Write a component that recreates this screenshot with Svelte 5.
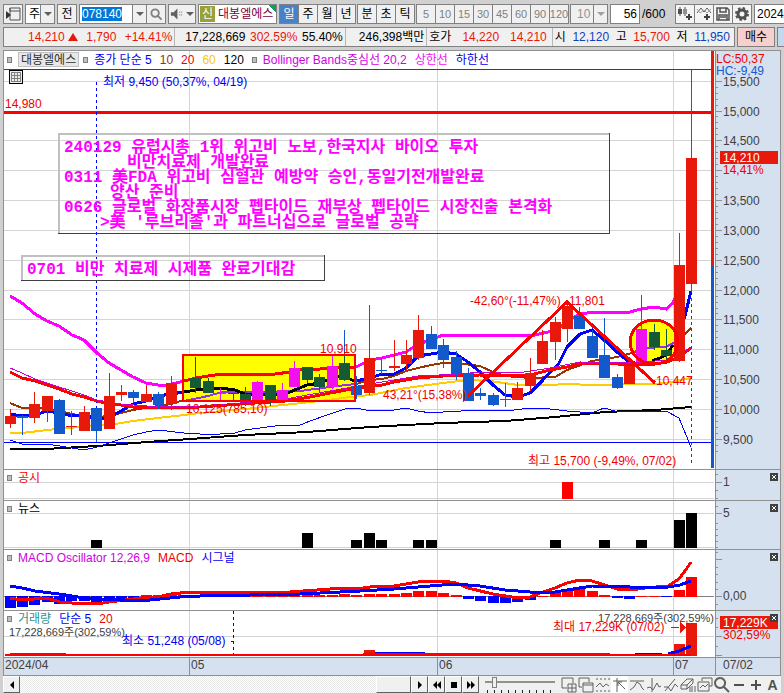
<script>
  import { onMount } from 'svelte';

  let codeInput;
  let code = '078140';
  let period = '일';
  let count = '56';
  let date = '2024/07/02';
  let tool = 3;

  const months = [189.5, 437.5, 673.5];
  const periods = [['일', '주', '월', '년'], ['분', '초', '틱']];
  const minutes = ['5', '10', '15', '30', '45', '60', '90', '120'];

  onMount(() => {
    codeInput.focus();
    codeInput.select();
  });

  const xAt = (i) => Math.floor(10 + i * 12.39);
  const yAt = (price) => Math.floor(409.5 - ((price - 10000) / 500) * 29.85) + 0.5;

  // kind, body top, body bottom, wick top, wick bottom
  const candles = [
    ['up', 416, 424, 409, 428], ['down', 416, 418, 415, 435], ['up', 404, 418, 392, 423],
    ['up', 396, 411, 396, 422], ['down', 400, 434, 399, 434], ['up', 426, 427, 411, 435],
    ['up', 412, 431, 406, 431], ['down', 408, 431, 408, 442], ['up', 396, 429, 373, 429],
    ['up', 392, 395, 385, 401], ['down', 392, 398, 390, 403], ['up', 394, 402, 385, 402],
    ['down', 394, 405, 392, 409], ['up', 383, 404, 376, 410], null,
    ['green', 378, 388, 357, 393], ['green', 381, 393, 378, 393], ['pink', 393, 394, 388, 401],
    ['green', 393, 394, 393, 401], ['green', 394, 402, 387, 406], ['pink', 382, 400, 381, 400],
    ['green', 385, 401, 385, 406], ['pink', 390, 401, 383, 401], ['pink', 368, 387, 361, 387],
    ['green', 367, 380, 367, 383], ['green', 377, 387, 374, 392], ['pink', 366, 387, 355, 389],
    ['green', 363, 380, 355, 381], ['down', 386, 395, 376, 399], ['up', 358, 393, 305, 395],
    ['down', 370, 371, 358, 374], ['up', 366, 368, 340, 371], ['up', 355, 364, 340, 372],
    ['up', 330, 358, 315, 360], ['down', 334, 349, 326, 349], ['down', 345, 360, 339, 368],
    ['down', 357, 374, 351, 380], ['down', 373, 401, 368, 401], ['down', 393, 396, 388, 400],
    ['down', 395, 405, 393, 406], ['up', 399, 400, 383, 407], ['up', 388, 400, 382, 400],
    ['up', 373, 386, 358, 391], ['up', 341, 364, 330, 364], ['up', 322, 342, 317, 360],
    ['up', 306, 329, 302, 342], ['down', 316, 329, 307, 329], ['down', 336, 358, 330, 358],
    ['down', 355, 378, 318, 378], ['down', 377, 388, 374, 389], ['up', 366, 384, 366, 384],
    ['pink', 329, 362, 320, 362], ['green', 332, 347, 324, 350], ['green', 350, 356, 329, 359],
    ['up', 265, 361, 233, 362], ['up', 158, 284, 70, 292]
  ];

  const lines = [
    { c: '#ffcc00', w: 2, p: '10,433 22,433 47,430 80,427 109,425 133,421 158,418 184,415 200,413 245,409 283,405 320,401 350,397 370,395 406,388 443,383 468,380 490,381 518,385 550,385 567,384 592,385 655,384 672,382 691,378' },
    { c: '#000000', w: 2, p: '10,449 45,449 97,446 147,442 190,439 245,435 307,432 370,427 443,423 505,421 555,417 605,412 655,410 691,407' },
    { c: '#0000ff', w: 1, p: '10,440 22,444 47,444 72,448 84,450 97,447 109,443 121,439 133,435 146,432 158,430 184,433 200,434 220,434 235,433 245,430 260,428 282,425 298,426 310,421 330,414 345,409 357,408 370,411 394,410 406,408 418,411 431,413 443,412 480,410 506,411 530,408 550,409 567,411 592,413 604,408 615,411 640,411 666,411 679,418 691,447' },
    { c: '#ff00ff', w: 3, p: '10,296 22,303 35,314 47,321 59,326 72,335 84,340 97,353 109,363 121,370 133,377 146,383 158,385 166,385 172,384 184,381' },
    { c: '#ff0000', w: 3, p: '184,381 196,378 208,376 222,374 275,374 290,372 300,369 320,369 345,367 356,367' },
    { c: '#ff00ff', w: 3, p: '356,367 370,360 382,358 394,355 406,352 418,344 431,340 443,335 535,335 548,332 560,327 568,320 580,314 587,313 630,312 641,309 654,307 666,309 673,303 679,290' },
    { c: '#993300', w: 2, p: '10,403 22,408 47,408 59,411 72,414 84,416 97,417 109,416 121,413 133,410 158,406 171,404 184,400' },
    { c: '#9030f0', w: 2, p: '184,401 208,396 222,392 260,392 300,391 330,387 355,384' },
    { c: '#993300', w: 2, p: '356,384 370,380 382,379 394,376 406,371 418,368 431,365 443,363 456,363 480,366 493,372 505,376 530,378 555,377 567,370 592,361 605,359 617,357 632,353' },
    { c: '#9030f0', w: 2, p: '632,353 644,348 666,347 677,341' },
    { c: '#993300', w: 2, p: '677,341 685,334 691,328' },
    { c: '#0000ff', w: 3, p: '10,414 22,416 35,415 47,411 59,413 72,416 84,415 97,419 109,418 121,411 133,404 146,401 158,396 171,394 184,392' },
    { c: '#000000', w: 3, p: '184,392 196,390 220,388 235,390 245,394 260,395 285,394 307,385 320,383 332,378 344,376 354,381' },
    { c: '#0000ff', w: 3, p: '356,381 370,378 382,374 394,374 406,368 418,356 431,354 443,352 456,354 468,362 480,372 493,385 505,395 518,397 530,393 542,381 550,372 558,365 567,347 580,334 592,330 604,340 617,352 629,362 640,364' },
    { c: '#000000', w: 3, p: '652,361 660,358 667,354 673,345' },
    { c: '#0000ff', w: 3, p: '678,337 685,316 691,291' },
    { c: '#ff0000', w: 3, p: '10,372 22,378 35,381 47,385 59,389 72,394 84,397 97,401 109,404 121,405 133,407 160,408 200,407 240,404 285,401 310,397 330,393 357,388 370,386 382,385 394,382 418,378 443,376 480,375 505,376 530,375 550,370 567,367 580,364 605,363 630,365 655,364 667,362 679,357 691,348' },
    { c: '#cc00cc', w: 1, p: '10,368 22,373 35,379 47,383 59,387 72,391 84,395 97,400 121,404 160,407 200,406 240,403 285,399 330,391 370,384 418,376 460,374 480,372 518,373 550,368 580,362 630,363 667,360 691,348' }
  ];

  const news = [[7, 540], [24, 533], [28, 540], [29, 533], [30, 540], [33, 540], [34, 540], [44, 540], [48, 540], [51, 540], [54, 520], [55, 513]];

  const macd = [609, 608, 606, 603, 605, 602, 602, 603, 601, 600, 599, 595, 595, 595, 595, 595, 595, 595, 596, 596,
    596, 596, 596, 595, 595, 595, 595, 594, 595, 594, 594, 594, 593, 591, 591, 593, 595, 600, 602, 604,
    604, 603, 601, 596, 592, 590, 589, 591, 595, 599, 600, 596, 596, 597, 590, 577];
  const macdLine = '10,598 22,600 47,598 60,602 72,603 97,604 109,602 133,599 158,597 171,594 190,592 290,592 330,589 345,588 357,589 370,587 394,586 406,584 418,582 440,581 450,582 456,583 468,588 493,594 518,598 530,597 540,593 555,588 567,583 580,580 592,581 605,585 617,589 630,590 645,588 668,586 679,579 685,571 691,562';
  const signalLine = '10,586 22,588 35,591 59,594 72,596 84,598 120,600 150,600 180,597 200,596 300,594 360,591 394,589 430,586 455,584 480,586 505,590 530,592 555,592 592,586 630,587 668,587 680,585 691,581';

  const prices = [15500, 15000, 14500, 14000, 13500, 13000, 12500, 12000, 11500, 11000, 10500, 10000, 9500];
  const minorTicks = Array.from({ length: 64 }, (_, i) => 9300 + i * 100);

  const marks = [
    { t: '14,980', x: 5, y: 108, c: 'red' },
    { t: '최저 9,450 (50,37%, 04/19)', x: 103, y: 86, c: 'blue' },
    { t: '10,910', x: 320, y: 353, c: 'red' },
    { t: '10,125(785,10)', x: 186, y: 413, c: 'red' },
    { t: '43,21°(15,38%)', x: 383, y: 399, c: 'red' },
    { t: '-42,60°(-11,47%)', x: 470, y: 305, c: 'red' },
    { t: '11,801', x: 569, y: 305, c: 'red' },
    { t: '10,447', x: 656, y: 385, c: 'red' },
    { t: '최고 15,700 (-9,49%, 07/02)', x: 528, y: 465, c: 'red' }
  ];

  const notes = [
    { t: '240129 유럽시총 1위 위고비 노보,한국지사 바이오 투자', x: 64, y: 152 },
    { t: '비만치료제 개발완료', x: 127, y: 167 },
    { t: '0311 美FDA 위고비 심혈관 예방약 승인,동일기전개발완료', x: 64, y: 182 },
    { t: '양산 준비', x: 110, y: 197 },
    { t: '0626 글로벌 화장품시장 펩타이드 재부상 펩타이드 시장진출 본격화', x: 64, y: 212 },
    { t: ">美 '루브리졸'과 파트너십으로 글로벌 공략", x: 100, y: 227 },
    { t: '0701 비만 치료제 시제품 완료기대감', x: 27, y: 274 }
  ];

  const tools = [
    { name: '새 차트', d: 'M12 6V1H1v10h5M7 7h8v8H7zM11 7v8M7 11h8' },
    { name: '창 겹치기', d: 'M4 10H1V1h10v4M5 6h10v9H5zM5 8h10' },
    { name: '구간 보기', d: 'M1 2h2M5 2h2M9 2h2M13 2h2M1 14h2M5 14h2M9 14h2M13 14h2M1 10l4-4 3 4 3-3 3 2' },
    { name: '십자선', d: 'M5 1v14M1 4h14M6 5l7 7M6 5v4M6 5h4' },
    { name: '수평선', d: 'M1 4h14M1 13l4-3 3-5 3 2 2 4 2 2' },
    { name: '수직선', d: 'M6 1v14M1 11l3-1 3 3 4-7 2 4 2-1' },
    { name: '추세선', d: 'M2 14L12 2M1 10h4l3 4 4-7 3 3' },
    { name: '지우개', d: 'M1 8l6-6h6l-6 6zM1 8v4h6V8M7 12l6-6V2M10 10v5M12 9v6M15 9v6' },
    { name: '차트 저장', d: 'M5 4V1h10v8h-3M1 5h11v9H1zM3 11l3-3 2 2 3-3' },
    { name: '돋보기', d: 'M6 1a5 5 0 1 0 .1 0M10 10l5 5' }
  ];
</script>

{#snippet arrow()}
  <svg class="arrow" viewBox="0 0 8 4" aria-hidden="true"><path d="M0 0h8L4 4z" /></svg>
{/snippet}

{#snippet grid(top, bottom, rows)}
  <rect x="3" y={top} width="778" height={bottom - top} fill="#fff" />
  {#each rows as y}<path class="grid" d="M4 {y}H714" />{/each}
  {#each months as x}<path class="grid" d="M{x} {top}V{bottom}" />{/each}
{/snippet}

{#snippet frame(top, bottom)}
  <rect x="715" y={top} width="66" height={bottom - top} fill="#d6e1f0" />
  <path class="frame" d="M3.5 {top}V{bottom}M715.5 {top}V{bottom}M780.5 {top}V{bottom}M3 {top + 0.5}H781" />
{/snippet}

{#snippet close(name)}
  <button class="close" aria-label="{name} 닫기">
    <svg viewBox="0 0 8 8"><path d="M2 2l4 4M6 2L2 6" stroke="#fff" /></svg>
  </button>
{/snippet}

<main>
  <header class="toolbar">
    <button class="tb" aria-label="메뉴"><svg viewBox="0 0 16 16"><path d="M5 2h10v12H5zM5 5h10M5 2v3" fill="none" stroke="#505050" /><path d="M1 5l5 4-5 4z" fill="#333" /></svg></button>
    <label class="combo cycle"><select aria-label="주기"><option>주</option><option>일</option></select>{@render arrow()}</label>
    <button class="tb">전</button>
    <div class="code">
      <input bind:this={codeInput} bind:value={code} aria-label="종목코드" />
      <button class="drop" aria-label="종목 목록">{@render arrow()}</button>
      <button class="find" aria-label="종목 검색"><svg viewBox="0 0 14 14"><circle cx="5.5" cy="5.5" r="4" fill="none" stroke="#808080" stroke-width="2" /><path d="M8.5 8.5l4 4" stroke="#808080" stroke-width="2" /></svg></button>
    </div>
    <button class="tb sound" aria-label="소리"><svg viewBox="0 0 14 14"><path d="M1 5h3l4-4v12L4 9H1z" fill="#606060" /><path d="M10 5h1M10 8h1M12 5h1M12 8h1" stroke="#606060" /></svg>{@render arrow()}</button>
    <div class="stock"><b>신</b><span>대봉엘에스</span></div>
    {#each periods as group}
      <div class="group">
        {#each group as p}
          <button class:active={period === p} on:click={() => (period = p)}>{p}</button>
        {/each}
      </div>
    {/each}
    <div class="group minutes">
      {#each minutes as m}<button disabled>{m}</button>{/each}
    </div>
    <label class="combo tick"><select aria-label="분 단위" disabled><option>10</option></select>{@render arrow()}</label>
    <label class="count"><input bind:value={count} aria-label="봉 개수" /><span>/600</span></label>
    <div class="group icons">
      <button aria-label="봉 추가"><svg viewBox="0 0 16 16"><path d="M3 1v9M8 1v9" stroke="#505050" /><path d="M1 3h4v5H1z" fill="#505050" /><path d="M6 3h4v5H6z" fill="#909090" /><path d="M12 8v6M9 11h6" stroke="#404040" stroke-width="2" /></svg></button>
      <button aria-label="지표 추가"><svg viewBox="0 0 16 16"><path d="M1 7l4-5 3 4 3-4 4 5" fill="none" stroke="#606060" /><path d="M1 3l3 4 4-3 3 3 4-4" fill="none" stroke="#a0a0a0" /><path d="M11 8v6M8 11h6" stroke="#404040" stroke-width="2" /></svg></button>
      <button aria-label="저장"><svg viewBox="0 0 16 16"><path d="M2 2h10l2 2v10H2zM5 2v4h6V2M4 14V9h8v5M5 11h6" fill="none" stroke="#505050" stroke-width="1.5" /></svg></button>
      <button aria-label="설정"><svg viewBox="0 0 16 16"><circle cx="8" cy="8" r="4" fill="none" stroke="#505050" stroke-width="3" /><circle cx="8" cy="8" r="6" fill="none" stroke="#505050" stroke-width="2" stroke-dasharray="2.4 2.3" /></svg></button>
    </div>
    <input class="date" bind:value={date} aria-label="날짜" />
  </header>

  <section class="quote">
    <div class="prices">
      <div class="cell up first"><span>14,210 <svg class="tri" viewBox="0 0 10 8"><path d="M5 0l5 8H0z" fill="#e8190a" /></svg></span><span>1,790</span><span>+14.41%</span></div>
      <div class="cell second"><span>17,228,669</span><span class="up">302.59%</span><span>55.40%</span></div>
      <div class="cell third"><span>246,398백만</span></div>
      <div class="cell fourth"><span>호가</span><span class="up">14,220</span><span class="up">14,210</span></div>
      <div class="cell last"><span>시</span><span class="dn">12,120</span><span>고</span><span class="up">15,700</span><span>저</span><span class="dn">11,950</span></div>
    </div>
    <button class="buy">매수</button>
    <button class="sell" aria-label="매도"></button>
  </section>

  <div class="chart">
    <section class="pane">
      <div class="legend">
        <i></i><button class="name">대봉엘에스</button><i></i>
        <span class="blue">종가 단순 5</span><span class="brown">10</span><span class="red">20</span><span class="gold">60</span><span>120</span>
        <i></i><span class="purple">Bollinger Bands중심선 20,2</span><span class="pink">상한선</span><span class="blue">하한선</span>
      </div>
      <svg class="plot" viewBox="3 50 778 419">
        {@render grid(50, 469, prices.map(yAt))}
        <path d="M4 69.5H712" stroke="#d80000" />
        <path d="M4 112.5H712" stroke="#ff0000" stroke-width="3" />
        <path d="M4 442.5H714" stroke="#0000ff" />
        <path d="M96.5 82V442" stroke="#0000ff" stroke-dasharray="3 3" />
        <path d="M691.5 292V463" stroke="#d80000" stroke-dasharray="3 3" />
        <rect x="183" y="355" width="172" height="46" fill="#ffff00" />
        <ellipse cx="654" cy="342" rx="24" ry="22" fill="#ffff00" />
        {#each lines as l}
          <polyline points={l.p} fill="none" stroke={l.c} stroke-width={l.w} />
        {/each}
        <path d="M344.5 330V355M270.5 402V406M245.5 402V406M356.5 376V399" stroke="#1259cc" />
        <path d="M641.5 295V320" stroke="#e8190a" />
        {#each candles as k, i}
          {#if k}
            <rect class={k[0]} x={xAt(i)} y={k[3]} width="1" height={k[4] - k[3]} />
            <rect class={k[0]} x={xAt(i) - 5} y={k[1]} width="11" height={k[2] - k[1]} />
          {/if}
        {/each}
        <rect x="183" y="355" width="172" height="46" fill="none" stroke="#ff0000" stroke-width="2" />
        <ellipse cx="654" cy="342" rx="24" ry="22" fill="none" stroke="#ff0000" stroke-width="3" />
        <path d="M468 396L567 302L655 383" fill="none" stroke="#ff0000" stroke-width="3" />
        <path d="M59 233V134H609M22 280V256H324" fill="none" stroke="#c0c0c0" stroke-width="2" />
        <path d="M58 233.5H609.5V133M21 280.5H324.5V255" fill="none" stroke="#404040" />
        {#each notes as n}<text class="note" x={n.x} y={n.y}>{n.t}</text>{/each}
        {#each marks as m}<text class={m.c} x={m.x} y={m.y}>{m.t}</text>{/each}
        <rect x="9.5" y="70.5" width="13" height="13" fill="#eee" stroke="#000" />
        <path d="M11 72.5h10M11 75.5h10M11 78.5h10M11 81.5h10M11.5 72v10M14.5 72v10M17.5 72v10M20.5 72v10" stroke="#808080" />
        <rect x="711" y="51" width="3" height="215" fill="#e8190a" />
        <rect x="711" y="266" width="3" height="202" fill="#1259cc" />
        {@render frame(50, 469)}
        {#each minorTicks as p}<path class="frame" d="M716 {yAt(p)}h2" />{/each}
        {#each prices as p}
          <path class="frame" d="M716 {yAt(p)}h6" />
          {#if p !== 14000}<text class="axis" x="723" y={yAt(p) + 4}>{p.toLocaleString('en-US')}</text>{/if}
        {/each}
        <rect x="716" y="51" width="64" height="25" fill="#d6e1f0" />
        <text class="red" x="716" y="63">LC:50,37</text>
        <text class="sky" x="716" y="75">HC:-9,49</text>
        <rect x="720" y="151" width="58" height="13" fill="#e8190a" />
        <text class="white" x="723" y="162">14,210</text>
        <text class="red" x="723" y="174">14,41%</text>
      </svg>
    </section>

    <section class="pane">
      <div class="legend"><i></i><span class="red">공시</span></div>
      <svg class="plot" viewBox="3 469 778 31">
        {@render grid(469, 500, [482.5, 498.5])}
        <rect x={xAt(45) - 5} y="482" width="11" height="17" fill="#ff0000" />
        {@render frame(469, 500)}
        <path class="frame" d="M716 474.5h2M716 482.5h6M716 490.5h2M716 498.5h2" />
        <text class="axis" x="723" y="486">1</text>
      </svg>
      {@render close('공시')}
    </section>

    <section class="pane">
      <div class="legend"><i></i><span>뉴스</span></div>
      <svg class="plot" viewBox="3 500 778 49">
        {@render grid(500, 549, [513.5, 547.5])}
        {#each news as [i, y]}<rect x={xAt(i) - 5} {y} width="11" height={548 - y} />{/each}
        {@render frame(500, 549)}
        <path class="frame" d="M716 506.5h2M716 513.5h6M716 523.5h2M716 529.5h2M716 535.5h2M716 541.5h2M716 547.5h2" />
        <text class="axis" x="723" y="517">5</text>
      </svg>
      {@render close('뉴스')}
    </section>

    <section class="pane">
      <div class="legend"><i></i><span class="purple">MACD Oscillator 12,26,9</span><span class="red">MACD</span><span class="blue">시그널</span></div>
      <svg class="plot" viewBox="3 549 778 61">
        {@render grid(549, 610, [])}
        <path d="M4 596.5H714" stroke="#808080" />
        {#each macd as y, i}
          <rect x={xAt(i) - 5} y={Math.min(y, 596)} width="11" height={Math.abs(597 - y) || 1} fill={y < 597 ? '#ff0000' : '#0000ff'} />
        {/each}
        <polyline points={macdLine} fill="none" stroke="#ff0000" stroke-width="3" />
        <polyline points={signalLine} fill="none" stroke="#0000ff" stroke-width="3" />
        {@render frame(549, 610)}
        <path class="frame" d="M716 552.5h2M716 559.5h6M716 567.5h2M716 574.5h2M716 582.5h2M716 589.5h2M716 596.5h6M716 604.5h2" />
        <text class="axis" x="723" y="600">0,00</text>
      </svg>
      {@render close('MACD')}
    </section>

    <section class="pane">
      <div class="legend"><i></i><span class="teal">거래량</span><span class="blue">단순 5</span><span class="red">20</span></div>
      <svg class="plot" viewBox="3 610 778 47">
        {@render grid(610, 657, [636.5])}
        <path d="M233.5 611V655" stroke="#0000ff" stroke-dasharray="3 3" />
        <path d="M231 641.5h3" stroke="#0000ff" />
        <rect class="up" x={xAt(29) - 5} y="650" width="11" height="6" />
        <rect class="up" x={xAt(54) - 5} y="644" width="11" height="12" />
        <rect class="up" x={xAt(55) - 5} y="623" width="11" height="33" />
        <path d="M375 652.5H425M635 653.5H662" stroke="#0000ff" />
        <path d="M668 654L679 651L691 646" fill="none" stroke="#0000ff" stroke-width="3" />
        <path d="M10 654H66M5 655H691M363 654H610" fill="none" stroke="#ff0000" stroke-width="2" />
        <path d="M671 627.5h8" stroke="#ff0000" />
        <path d="M680 622l6 5.500-6 5.500z" fill="#e8190a" />
        <text class="axis volume" x="9" y="636">17,228,669주(302,59%)</text>
        <text class="blue" x="122" y="645">최소 51,248 (05/08)</text>
        <text class="red" x="553" y="631">최대 17,229K (07/02)</text>
        <text class="axis volume" x="714" y="622" text-anchor="end">17,228,669주(302,59%)</text>
        {@render frame(610, 657)}
        <path class="frame" d="M716 618.5h2M716 627.5h2M716 636.5h6M716 646.5h2M716 655.5h6" />
        <rect x="720" y="616" width="58" height="13" fill="#e8190a" />
        <text class="white" x="723" y="627">17,229K</text>
        <text class="red" x="723" y="639">302,59%</text>
      </svg>
      {@render close('거래량')}
    </section>

    <svg class="plot" viewBox="3 657 778 19">
      <rect x="3" y="657" width="778" height="19" fill="#d6e1f0" />
      <path class="frame" d="M3 657.5H781M3 675.5H781M3.500 657V676M780.5 657V676M715.5 657V676" />
      {#each months as x}<path class="frame" d="M{x} 657V676" />{/each}
      <text class="axis" x="5" y="669">2024/04</text>
      <text class="axis" x="191" y="669">05</text>
      <text class="axis" x="439" y="669">06</text>
      <text class="axis" x="675" y="669">07</text>
      <text class="axis" x="723" y="669">07/02</text>
    </svg>
  </div>

  <footer>
    <button class="raised" aria-label="왼쪽"><svg viewBox="0 0 16 16"><path d="M10 4v8L6 8z" /></svg></button>
    <div class="track"><div class="thumb"></div></div>
    <button class="raised" aria-label="오른쪽"><svg viewBox="0 0 16 16"><path d="M6 4v8l4-4z" /></svg></button>
    <button class="raised" aria-label="뒤로"><svg viewBox="0 0 16 16"><path d="M8 4v8L4 8zM12 4v8L8 8z" /></svg></button>
    <button class="raised" aria-label="정지"><svg viewBox="0 0 16 16"><path d="M5 5h6v6H5z" /></svg></button>
    <button class="raised" aria-label="앞으로"><svg viewBox="0 0 16 16"><path d="M4 4v8l4-4zM8 4v8l4-4z" /></svg></button>
    <label class="speed">
      <input type="range" min="0" max="10" value="1" aria-label="속도" />
    </label>
    {#each tools as t, i}
      <button class="tool" class:active={tool === i} aria-label={t.name} on:click={() => (tool = i)}>
        <svg viewBox="0 0 16 16"><path d={t.d} fill="none" stroke="#606060" stroke-width={i === 9 ? 2 : 1} /></svg>
      </button>
    {/each}
    <button class="tool" aria-label="축소"><svg viewBox="0 0 16 16"><path d="M3 8h10" stroke="#505050" stroke-width="2" /></svg></button>
    <button class="tool" aria-label="확대"><svg viewBox="0 0 16 16"><path d="M3 8h10M8 3v10" stroke="#505050" stroke-width="2" /></svg></button>
    <button class="tool letter">A</button>
  </footer>
</main>

<style>
  :global(body) {
    background: #d0d0d0;
    overflow: hidden;
  }

  main {
    font: 12px/14px "Liberation Sans", "Noto Sans CJK KR", sans-serif;
    color: #000;
  }

  button, input, select {
    font: inherit;
    color: inherit;
    margin: 0;
    padding: 0;
    border: 1px solid #808080;
    border-radius: 0;
    background: #f0f0f0;
    box-sizing: border-box;
  }

  button {
    display: flex;
    align-items: center;
    justify-content: center;
    flex: none;
  }

  .toolbar {
    display: flex;
    align-items: stretch;
    gap: 2px;
    height: 20px;
    padding: 4px 0 3px 3px;
    overflow: hidden;
    white-space: nowrap;
  }

  .tb {
    width: 20px;
  }

  .tb svg, .icons svg {
    width: 16px;
    height: 16px;
  }

  .toolbar .arrow {
    width: 8px;
    height: 4px;
    fill: #606060;
  }

  .combo {
    position: relative;
    display: flex;
    flex: none;
  }

  .combo select {
    appearance: none;
    width: 100%;
    padding-left: 3px;
    background: linear-gradient(to left, #f0f0f0 13px, #808080 13px, #808080 14px, #fff 14px);
  }

  .combo .arrow {
    position: absolute;
    right: 3px;
    top: 8px;
  }

  .cycle {
    width: 30px;
  }

  .tick {
    width: 38px;
  }

  .tick select {
    padding-left: 6px;
    color: #909090;
    opacity: 1;
    background: linear-gradient(to left, #f0f0f0 13px, #808080 13px, #808080 14px, #f0f0f0 14px);
  }

  .tick .arrow {
    fill: #a0a0a0;
  }

  .code {
    display: flex;
    flex: none;
    width: 87px;
  }

  .code input {
    flex: 1;
    min-width: 0;
    padding-left: 2px;
    background: #fff;
    caret-color: #f08020;
    outline: none;
  }

  .code input::selection {
    color: #fff;
    background: #0078d7;
  }

  .drop {
    width: 14px;
    border-left: 0;
  }

  .find {
    width: 19px;
    border-left: 0;
  }

  .find svg {
    width: 13px;
    height: 13px;
  }

  .sound {
    width: 28px;
    gap: 3px;
  }

  .sound svg:first-child {
    width: 13px;
  }

  .stock {
    display: flex;
    align-items: center;
    gap: 3px;
    flex: none;
    width: 79px;
    box-sizing: border-box;
    border: 1px solid #808080;
    padding-left: 1px;
    color: #800040;
    background: linear-gradient(45deg, transparent 50%, #10a060 50%) right top / 7px 7px no-repeat, #fff;
    overflow: hidden;
  }

  .stock b {
    color: #fff;
    background: #98a038;
    font-weight: 400;
    padding: 1px 2px;
  }

  .group {
    display: flex;
    flex: none;
  }

  .group button {
    width: 20px;
    margin-right: -1px;
  }

  .group .active {
    color: #fff;
    background: #4a80c8;
  }

  .group button:disabled {
    color: #808080;
  }

  .icons {
    margin-right: 1px;
  }

  .minutes {
    font-size: 11px;
  }

  .count {
    display: flex;
    align-items: center;
    gap: 2px;
    flex: none;
    width: 63px;
  }

  .count input {
    width: 30px;
    height: 20px;
    padding-right: 2px;
    text-align: right;
    background: #fff;
  }

  .icons button {
    background: #f4f4f4;
  }

  .date {
    width: 76px;
    flex: none;
    padding-left: 2px;
    background: #fff;
  }

  .quote {
    display: flex;
    gap: 2px;
    height: 20px;
    padding: 0 0 3px 3px;
    overflow: hidden;
    white-space: nowrap;
  }

  .prices {
    display: flex;
    flex: 1;
    box-sizing: border-box;
    border: 1px solid #808080;
    background: #f0f0f0;
  }

  .cell {
    display: flex;
    align-items: center;
    justify-content: space-between;
    box-sizing: border-box;
    padding: 0 2px;
    border-right: 1px solid #b8b8b8;
  }

  .first {
    flex: 1 1 172px;
    padding-left: 24px;
  }

  .second {
    flex: 1 1 171px;
    padding-left: 10px;
  }

  .third {
    flex: 1 1 82px;
    justify-content: flex-end;
  }

  .fourth {
    flex: 1 1 126px;
    padding-right: 5px;
  }

  .last {
    flex: 1 1 182px;
    padding-right: 4px;
    border: 0;
  }

  .tri {
    width: 10px;
    height: 8px;
  }

  .up {
    color: #e8190a;
    fill: #e8190a;
  }

  .dn {
    color: #1040c0;
  }

  .buy {
    width: 38px;
    background: #f5d0cc;
  }

  .sell {
    width: 38px;
    margin-right: -31px;
    background: #c4d8f0;
  }

  .chart {
    padding: 0 3px;
  }

  .pane {
    position: relative;
  }

  .plot {
    display: block;
    width: 100%;
    shape-rendering: crispEdges;
    font: 12px "Liberation Sans", "Noto Sans CJK KR", sans-serif;
  }

  .legend {
    position: absolute;
    left: 4px;
    top: 2px;
    display: flex;
    align-items: center;
    gap: 8px;
    white-space: nowrap;
  }

  .legend i {
    width: 3px;
    height: 4px;
    border: 1px solid #808080;
    background: #c0c0c0;
    margin-right: -2px;
  }

  .legend .name {
    height: 15px;
    padding: 0 2px;
    margin-right: -4px;
    border-color: #c0c0c0;
    background: #e8e8e8;
    color: #303030;
  }

  .blue {
    color: #0000f0;
    fill: #0000f0;
  }

  .red {
    color: #f00000;
    fill: #f00000;
  }

  .brown {
    color: #993300;
  }

  .gold {
    color: #f8c800;
  }

  .purple {
    color: #d000e0;
  }

  .teal {
    color: #309090;
  }

  .pink {
    color: #f010f0;
    fill: #f010f0;
  }

  .down, .sky {
    fill: #1259cc;
  }

  .green {
    fill: #145a32;
  }

  .white {
    fill: #fff;
  }

  .axis {
    fill: #404040;
  }

  .volume {
    font-size: 11px;
  }

  .grid {
    stroke: #d4d4d4;
  }

  .frame {
    stroke: #909090;
  }

  .note {
    font: bold 16px "Liberation Mono", "Noto Sans CJK KR", monospace;
    fill: #ff00ff;
  }

  .close {
    position: absolute;
    right: 3px;
    top: 4px;
    width: 8px;
    height: 8px;
    border: 0;
    background: #404040;
  }

  .close svg {
    width: 8px;
    height: 8px;
  }

  footer {
    display: flex;
    height: 17px;
    margin: 0 3px;
    background: #f0f0f0;
    overflow: hidden;
  }

  .raised, .thumb {
    width: 17px;
    border: 1px solid;
    border-color: #fff #606060 #606060 #fff;
  }

  .raised svg, .tool svg {
    width: 16px;
    height: 16px;
    flex: none;
  }

  .track {
    display: flex;
    justify-content: flex-end;
    flex: 1;
    background: repeating-conic-gradient(#fff 0 25%, #e8e8e8 0 50%) 0 0 / 2px 2px;
  }

  .thumb {
    width: 35px;
    box-sizing: border-box;
    background: #f0f0f0;
  }

  .speed {
    display: flex;
    flex-direction: column;
    width: 70px;
    margin: 0 5px 0 6px;
    background: repeating-linear-gradient(to right, #202020 0 1px, transparent 1px 7px) 2px 14px / 100% 3px no-repeat;
  }

  .speed input {
    appearance: none;
    width: 100%;
    height: 12px;
    border: 0;
    background: linear-gradient(#909090, #909090) 0 5px / 100% 2px no-repeat;
  }

  .speed input::-webkit-slider-thumb {
    appearance: none;
    width: 5px;
    height: 11px;
    border: 1px solid #808080;
    background: #f0f0f0;
  }

  .tool {
    width: 17px;
    border: 0;
  }

  .tool.active {
    background: #fff;
  }

  .letter {
    font-weight: 700;
    font-size: 14px;
    color: #505050;
  }
</style>
